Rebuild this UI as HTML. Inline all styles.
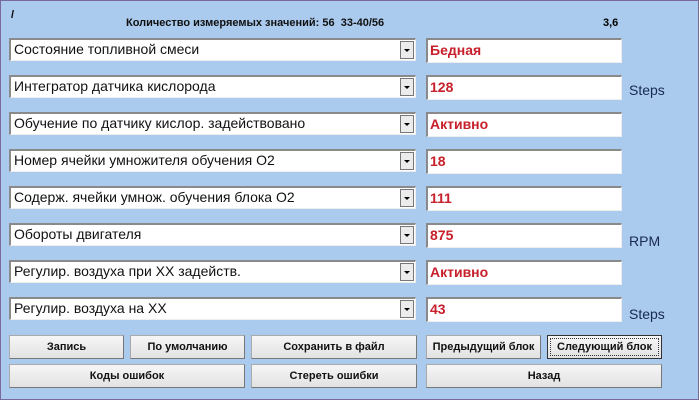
<!DOCTYPE html>
<html><head><meta charset="utf-8"><style>
body{margin:0;width:699px;height:400px;overflow:hidden;font-family:"Liberation Sans",sans-serif}
.w{position:absolute;left:0;top:0;width:697px;height:398px;background:#aacbee;border:1px solid #7a6a9a}
.a{position:absolute}
.cb{position:absolute;left:8px;width:407px;height:23px;background:#fff;border-top:2px solid #8a8a8a;border-left:2px solid #8a8a8a;border-bottom:1px solid #eee;border-right:1px solid #eee;box-sizing:border-box;font-size:14px;line-height:19px;padding-left:3px;color:#111}
.cb i{position:absolute;right:1px;top:1px;width:14px;height:18px;background:#ececec;border:1px solid #777;box-sizing:border-box}
.cb i:after{content:"";position:absolute;left:3px;top:7px;border-left:3px solid transparent;border-right:3px solid transparent;border-top:3px solid #000}
.vb{position:absolute;left:425px;width:196px;height:25px;background:#fff;border-top:2px solid #8a8a8a;border-left:2px solid #8a8a8a;border-bottom:1px solid #eee;border-right:1px solid #eee;box-sizing:border-box;font-size:14px;font-weight:bold;color:#c8202a;line-height:20px;padding-left:2px}
.u{position:absolute;left:628px;font-size:14px;color:#1a2a50}
.b{position:absolute;height:24px;background:linear-gradient(#f6f6f6,#e2e2e2);border:1px solid #aaa;border-right-color:#777;border-bottom-color:#777;box-sizing:border-box;font-size:11px;font-weight:bold;text-align:center;line-height:22px;color:#111}
</style></head><body><div class="w">
<div class="a" style="left:10px;top:8px;font-size:11px;font-weight:bold">/</div>
<div class="a" style="left:125px;top:16px;font-size:11px;font-weight:bold;color:#111">Количество измеряемых значений: 56&nbsp; 33-40/56</div>
<div class="a" style="left:602px;top:16px;font-size:11px;font-weight:bold">3,6</div>

<div class="cb" style="top:37px">Состояние топливной смеси<i></i></div><div class="vb" style="top:37px">Бедная</div>
<div class="cb" style="top:74px">Интегратор датчика кислорода<i></i></div><div class="vb" style="top:74px">128</div><div class="u" style="top:81px">Steps</div>
<div class="cb" style="top:111px">Обучение по датчику кислор. задействовано<i></i></div><div class="vb" style="top:111px">Активно</div>
<div class="cb" style="top:148px">Номер ячейки умножителя обучения O2<i></i></div><div class="vb" style="top:148px">18</div>
<div class="cb" style="top:185px">Содерж. ячейки умнож. обучения блока O2<i></i></div><div class="vb" style="top:185px">111</div>
<div class="cb" style="top:222px">Обороты двигателя<i></i></div><div class="vb" style="top:222px">875</div><div class="u" style="top:232px">RPM</div>
<div class="cb" style="top:259px">Регулир. воздуха при XX задейств.<i></i></div><div class="vb" style="top:259px">Активно</div>
<div class="cb" style="top:296px">Регулир. воздуха на XX<i></i></div><div class="vb" style="top:296px">43</div><div class="u" style="top:305px">Steps</div>

<div class="b" style="left:8px;top:334px;width:115px">Запись</div>
<div class="b" style="left:129px;top:334px;width:115px">По умолчанию</div>
<div class="b" style="left:250px;top:334px;width:166px">Сохранить в файл</div>
<div class="b" style="left:425px;top:334px;width:115px">Предыдущий блок</div>
<div class="b" style="left:546px;top:334px;width:115px;border:1px solid #333;outline:1px dotted #333;outline-offset:-4px">Следующий блок</div>
<div class="b" style="left:8px;top:363px;width:236px">Коды ошибок</div>
<div class="b" style="left:250px;top:363px;width:166px">Стереть ошибки</div>
<div class="b" style="left:425px;top:363px;width:236px">Назад</div>
</div></body></html>
